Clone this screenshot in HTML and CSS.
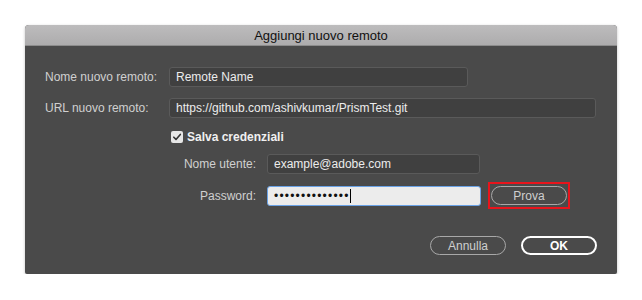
FILE: index.html
```html
<!DOCTYPE html>
<html lang="it">
<head>
    <meta charset="UTF-8">
    <meta name="viewport" content="width=device-width, initial-scale=1.0">
    <title>Aggiungi nuovo remoto</title>
    <link rel="stylesheet" href="styles.css">
</head>
<body>
    <div class="dialog">
        <div class="titlebar">Aggiungi nuovo remoto</div>
        <div class="content">
            <div class="form-row">
                <label class="label">Nome nuovo remoto:</label>
                <input class="field name-field" type="text" value="Remote Name" readonly>
            </div>
            <div class="form-row url-row">
                <label class="label">URL nuovo remoto:</label>
                <input class="field url-field" type="text" value="https://github.com/ashivkumar/PrismTest.git" readonly>
            </div>
            <div class="check-row">
                <span class="checkbox">
                    <svg width="10" height="10" viewBox="0 0 10 10">
                        <path d="M1.8 5.2 L4 7.4 L8.3 2.4" fill="none" stroke="#333" stroke-width="1.6" stroke-linecap="round" stroke-linejoin="round"/>
                    </svg>
                </span>
                <span class="check-label">Salva credenziali</span>
            </div>
            <div class="sub-row user-row">
                <label class="sub-label">Nome utente:</label>
                <input class="field user-field" type="text" value="example@adobe.com" readonly>
            </div>
            <div class="sub-row pass-row">
                <label class="sub-label">Password:</label>
                <div class="field pass-field">
                    <span class="dots">••••••••••••••</span><span class="caret"></span>
                </div>
                <span class="highlight">
                    <button class="pill">Prova</button>
                </span>
            </div>
            <div class="footer">
                <button class="pill">Annulla</button>
                <button class="pill ok-btn">OK</button>
            </div>
        </div>
    </div>
</body>
</html>
```

FILE: styles.css
```css
body {
    margin: 0;
    background-color: #ffffff;
    font-family: 'Liberation Sans', Arial, sans-serif;
    font-size: 12px;
}

.dialog {
    margin: 25px 0 0 25px;
    width: 592px;
    height: 249px;
    background-color: #4a4a4a;
    border-radius: 4px 4px 2px 2px;
    box-shadow: 0 1px 3px rgba(0, 0, 0, 0.25);
    overflow: hidden;
}

.titlebar {
    height: 20px;
    line-height: 21px;
    text-align: center;
    font-size: 13px;
    color: #111111;
    background: linear-gradient(#bdbcbd, #adacad);
    border-bottom: 1px solid #8c8c8c;
}

.content {
    padding: 21px 20px 0 20px;
}

.form-row {
    display: flex;
    align-items: center;
}

.url-row {
    margin-top: 11px;
}

.label {
    width: 124px;
    color: #d0d0d0;
}

.field {
    box-sizing: border-box;
    height: 20px;
    padding: 0 6px;
    border: 1px solid #5a5a5a;
    border-radius: 3px;
    background-color: #404040;
    color: #ececec;
    font-family: 'Liberation Sans', Arial, sans-serif;
    font-size: 12px;
    outline: none;
}

.name-field {
    width: 299px;
}

.url-field {
    width: 427px;
}

.check-row {
    display: flex;
    align-items: center;
    margin: 11px 0 0 126px;
    height: 16px;
}

.checkbox {
    display: flex;
    align-items: center;
    justify-content: center;
    width: 12px;
    height: 12px;
    border-radius: 2px;
    background-color: #e6e6e6;
}

.check-label {
    margin-left: 4px;
    color: #f0f0f0;
    font-weight: bold;
}

.sub-row {
    display: flex;
    align-items: center;
    margin-left: 111px;
}

.user-row {
    margin-top: 9px;
}

.pass-row {
    margin-top: 8px;
}

.sub-label {
    width: 100px;
    margin-right: 11px;
    text-align: right;
    white-space: nowrap;
    color: #d0d0d0;
}

.user-field {
    width: 213px;
}

.pass-field {
    display: flex;
    align-items: center;
    width: 214px;
    height: 20px;
    background-color: #ececec;
    border-color: #6aa2e6;
    color: #111111;
}

.dots {
    letter-spacing: 1.2px;
    font-size: 12px;
}

.caret {
    width: 1px;
    height: 14px;
    background-color: #000000;
}

.pill {
    box-sizing: border-box;
    width: 76px;
    height: 19px;
    padding: 0;
    border: 1px solid #a8a8a8;
    border-radius: 10px;
    background: transparent;
    color: #cfcfcf;
    font-family: 'Liberation Sans', Arial, sans-serif;
    font-size: 12px;
}

.highlight {
    display: flex;
    margin-left: 7px;
    padding: 2px 1px;
    border: 2px solid #e8141c;
}

.footer {
    display: flex;
    justify-content: flex-end;
    gap: 15px;
    margin-top: 27px;
}

.ok-btn {
    border: 2px solid #ffffff;
    color: #ffffff;
    font-weight: bold;
}
```
